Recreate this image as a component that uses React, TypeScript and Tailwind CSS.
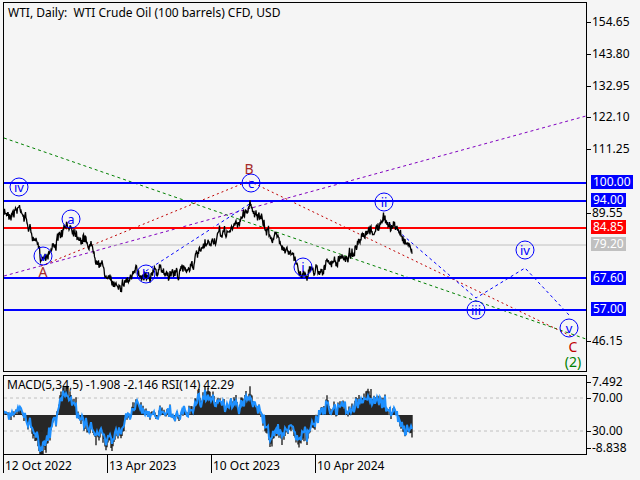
import React from 'react';

const W = 582;

function rng(seed: number) {
  let s = seed;
  return () => {
    s = (s * 16807) % 2147483647;
    return s / 2147483647;
  };
}

// key price points in chart coordinates
const keys: [number, number][] = [
  [0, 212], [17, 203], [37, 255], [67, 222], [90, 245], [107, 282], [142, 268], [177, 270],
  [212, 236], [230, 225], [247, 200], [262, 228], [280, 240], [297, 270], [337, 258], [360, 238],
  [380, 218], [395, 228], [408, 245],
];

function buildSeries() {
  const r = rng(7);
  const pts: [number, number][] = [];
  let walk = 0;
  for (let x = 0; x <= 408; x += 0.5) {
    let i = 0;
    while (i < keys.length - 2 && keys[i + 1][0] < x) i++;
    const [x0, y0] = keys[i];
    const [x1, y1] = keys[i + 1];
    const t = (x - x0) / (x1 - x0 || 1);
    walk = walk * 0.85 + (r() - 0.5) * 6;
    const y = y0 + (y1 - y0) * t + walk + (r() - 0.5) * 7;
    pts.push([x, y]);
  }
  return pts;
}
const series = buildSeries();

function Circle({ x, y, t }: { x: number; y: number; t: string }) {
  return (
    <g>
      <circle cx={x} cy={y} r={9} fill="none" stroke="#0000ff" strokeWidth={1} />
      <text x={x} y={y + 4.5} textAnchor="middle" fontSize={13} fill="#0000ff">{t}</text>
    </g>
  );
}

const hLines = [
  { y: 180, c: '#0000ff', w: 2 },
  { y: 198, c: '#0000ff', w: 2 },
  { y: 225, c: '#ff0000', w: 2 },
  { y: 242, c: '#c0c0c0', w: 1 },
  { y: 275, c: '#0000ff', w: 2 },
  { y: 307, c: '#0000ff', w: 2 },
];

const axisText = [
  { y: 22, t: '154.65' }, { y: 54, t: '143.80' }, { y: 86, t: '132.95' }, { y: 117, t: '122.10' },
  { y: 149, t: '111.25' }, { y: 213, t: '89.55' }, { y: 341, t: '46.15' },
];
const axisBoxes = [
  { y: 182, t: '100.00', c: 'bg-[#0000ff]' },
  { y: 200, t: '94.00', c: 'bg-[#0000ff]' },
  { y: 227, t: '84.85', c: 'bg-[#ff0000]' },
  { y: 244, t: '79.20', c: 'bg-[#c0c0c0]' },
  { y: 278, t: '67.60', c: 'bg-[#0000ff]' },
  { y: 309, t: '57.00', c: 'bg-[#0000ff]' },
];

function MainChart() {
  const path = series.map(([x, y], i) => `${i ? 'L' : 'M'}${x},${y.toFixed(1)}`).join(' ');
  return (
    <svg width={W} height={368} className="block">
      <line x1={0} y1={135} x2={582} y2={336} stroke="#008000" strokeDasharray="3 3" />
      <line x1={0} y1={273} x2={582} y2={113} stroke="#8000c0" strokeDasharray="3 3" />
      <polyline points="37,263 245,178 567,333" fill="none" stroke="#c00000" strokeDasharray="2 3" />
      <polyline points="142,268 247,200" fill="none" stroke="#0000ff" strokeDasharray="3 3" />
      <polyline points="380,216 472,295 521,265 565,312" fill="none" stroke="#0000ff" strokeDasharray="3 3" />
      {hLines.map((l) => (
        <line key={l.y} x1={0} y1={l.y} x2={582} y2={l.y} stroke={l.c} strokeWidth={l.w} />
      ))}
      <path d={path} fill="none" stroke="#000" strokeWidth={1.3} />
      <Circle x={15} y={184} t="iv" />
      <Circle x={67} y={216} t="a" />
      <Circle x={39} y={253} t="v" />
      <Circle x={142} y={271} t="b" />
      <Circle x={247} y={180} t="c" />
      <Circle x={380} y={199} t="ii" />
      <Circle x={299} y={264} t="i" />
      <Circle x={472} y={307} t="iii" />
      <Circle x={521} y={247} t="iv" />
      <Circle x={565} y={325} t="v" />
      <text x={39} y={274} textAnchor="middle" fontSize={14} fill="#a52a2a">A</text>
      <text x={245} y={171} textAnchor="middle" fontSize={14} fill="#a52a2a">B</text>
      <text x={569} y={349} textAnchor="middle" fontSize={14} fill="#c00000">C</text>
      <text x={569} y={364} textAnchor="middle" fontSize={14} fill="#008000">(2)</text>
    </svg>
  );
}

function Macd() {
  const r = rng(3);
  const bars: React.ReactNode[] = [];
  const rsi: string[] = [];
  for (let i = 0; i < series.length; i += 2) {
    const [x, y] = series[i];
    const prev = series[Math.max(0, i - 40)][1];
    const v = (prev - y) * 0.9;
    bars.push(<line key={i} x1={x} x2={x} y1={39} y2={39 - v} stroke="#000" strokeWidth={1.2} />);
    const rv = 39 - (prev - y) * 0.7 + (r() - 0.5) * 8;
    rsi.push(`${x},${rv.toFixed(1)}`);
  }
  return (
    <svg width={W} height={78} className="block">
      <line x1={0} y1={22} x2={582} y2={22} stroke="#c0c0c0" strokeDasharray="3 3" />
      <line x1={0} y1={55} x2={582} y2={55} stroke="#c0c0c0" strokeDasharray="3 3" />
      {bars}
      <polyline points={rsi.join(' ')} fill="none" stroke="#1e90ff" strokeWidth={2} />
      <text x={3} y={13} fontSize={12} fill="#000">MACD(5,34,5) -1.908 -2.146 RSI(14) 42.29</text>
    </svg>
  );
}

function Tick({ t }: { t: string }) {
  return (
    <>
      <span className="w-[4px] h-px bg-black mr-[1px]" />
      <span>{t}</span>
    </>
  );
}

export default function App() {
  return (
    <div className="w-[640px] h-[480px] bg-[#f5f5f5] text-black overflow-hidden text-[12px] font-['Tahoma','DejaVu_Sans',sans-serif]">
      <div className="flex pl-[3px] pt-[2px]">
        <div className="relative w-[584px] h-[370px] border border-black">
          <div className="absolute left-[4px] top-[1px]">WTI, Daily:&nbsp; WTI Crude Oil (100 barrels) CFD, USD</div>
          <MainChart />
        </div>
        <div className="relative flex-1">
          {axisText.map((a) => (
            <div key={a.t} className="absolute left-0 flex items-center h-[14px]" style={{ top: a.y - 9 }}>
              <Tick t={a.t} />
            </div>
          ))}
          {axisBoxes.map((a) => (
            <div key={a.t} className={`absolute left-[4px] h-[14px] px-[2px] leading-[14px] text-white ${a.c}`} style={{ top: a.y - 9 }}>
              {a.t}
            </div>
          ))}
        </div>
      </div>
      <div className="flex pl-[3px] mt-[3px]">
        <div className="w-[584px] h-[80px] border border-black">
          <Macd />
        </div>
        <div className="relative flex-1">
          {[
            { y: 7, t: '7.492' }, { y: 23, t: '70.00' }, { y: 56, t: '30.00' }, { y: 73, t: '-8.838' },
          ].map((a) => (
            <div key={a.t} className="absolute left-0 flex items-center h-[14px]" style={{ top: a.y - 7 }}>
              <Tick t={a.t} />
            </div>
          ))}
        </div>
      </div>
      <div className="flex pl-[3px] h-[20px]">
        {['12 Oct 2022', '13 Apr 2023', '10 Oct 2023', '10 Apr 2024'].map((d) => (
          <div key={d} className="w-[104px] border-l border-black pl-[1px] pt-[4px] h-[18px] leading-[14px] whitespace-nowrap">{d}</div>
        ))}
      </div>
    </div>
  );
}
